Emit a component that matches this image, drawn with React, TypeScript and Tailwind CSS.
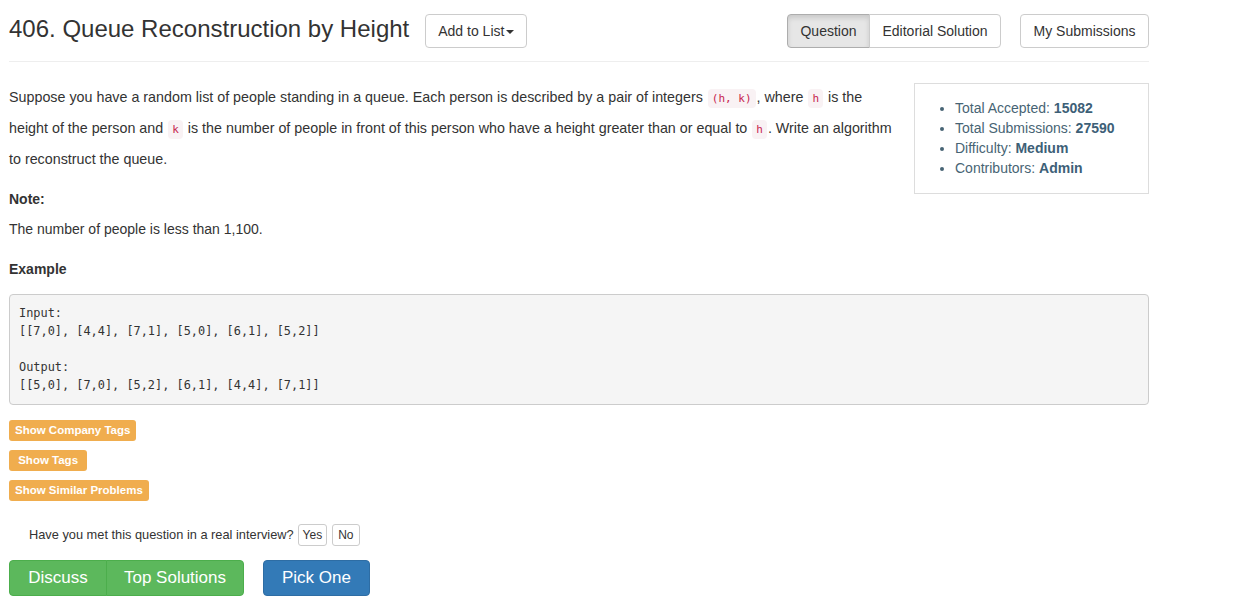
import React from "react";

const Code = ({ children }: { children: React.ReactNode }) => (
  <code className="mx-px rounded-[4px] bg-[#f9f2f4] px-[4px] py-[3px] text-[11px] leading-none text-[#c7254e] [font-family:'DejaVu_Sans_Mono','Liberation_Mono',monospace]">
    {children}
  </code>
);

const Label = ({ children }: { children: React.ReactNode }) => (
  <span className="inline-block rounded-[3px] bg-[#f0ad4e] px-[6px] pb-[3px] pt-[3px] text-[11.5px] font-bold leading-[15px] text-white">
    {children}
  </span>
);

export default function App() {
  return (
    <div className="min-h-[598px] w-[1245px] bg-white text-[14px] text-[#333] [font-family:'Liberation_Sans',Arial,sans-serif]">
      <div className="w-[1158px] pl-[9px] pr-[9px]">
        {/* header */}
        <div className="flex items-start border-b border-[#eee] pb-[13px] pt-[14px]">
          <h3 className="mt-[-3px] text-[24px] font-normal leading-[36px] text-[#333]">
            406. Queue Reconstruction by Height
          </h3>
          <button className="ml-[16px] flex h-[34px] items-center rounded-[4px] border border-[#ccc] bg-white px-[12px] text-[14px] text-[#333]">
            Add to List
            <span className="ml-[2px] mt-[1px] inline-block h-0 w-0 border-x-[4px] border-t-[4px] border-x-transparent border-t-[#333]" />
          </button>
          <div className="ml-auto flex">
            <button className="h-[34px] w-[83px] rounded-l-[4px] border border-[#adadad] bg-[#e6e6e6] text-[14px] text-[#333] shadow-[inset_0_3px_5px_rgba(0,0,0,0.125)]">
              Question
            </button>
            <button className="-ml-px h-[34px] w-[132px] rounded-r-[4px] border border-[#ccc] bg-white text-[14px] text-[#333]">
              Editorial Solution
            </button>
            <button className="ml-[19px] h-[34px] w-[129px] rounded-[4px] border border-[#ccc] bg-white text-[14px] text-[#333]">
              My Submissions
            </button>
          </div>
        </div>

        {/* body */}
        <div className="flex items-start pt-[20px]">
          <div className="flex-1 pr-[22px]">
            <p className="text-[14.3px] leading-[31px]">
              Suppose you have a random list of people standing in a queue. Each person is described by a pair of integers <Code>(h, k)</Code>, where <Code>h</Code> is the height of the person and <Code>k</Code> is the number of people in front of this person who have a height greater than or equal to <Code>h</Code>. Write an algorithm to reconstruct the queue.
            </p>
          </div>
          <div className="mb-[-19px] mt-[1px] w-[235px] border border-[#ddd] pb-[15px] pt-[14px] text-[#476474]">
            <ul className="list-disc pl-[40px] leading-[20px] marker:text-[#476474]">
              <li>Total Accepted: <b className="text-[#3d6077]">15082</b></li>
              <li>Total Submissions: <b className="text-[#3d6077]">27590</b></li>
              <li>Difficulty: <b className="text-[#3d6077]">Medium</b></li>
              <li>Contributors: <b className="text-[#3d6077]">Admin</b></li>
            </ul>
          </div>
        </div>

        <p className="mt-[14px] font-bold leading-[20px]">Note:</p>
        <p className="mt-[10px] leading-[20px]">The number of people is less than 1,100.</p>
        <p className="mt-[20px] font-bold leading-[20px]">Example</p>

        <pre className="mt-[15px] rounded-[4px] border border-[#ccc] bg-[#f5f5f5] px-[9px] pb-[10px] pt-[9px] text-[11.9px] leading-[18px] text-[#333] [font-family:'DejaVu_Sans_Mono','Liberation_Mono',monospace]">
{`Input:
[[7,0], [4,4], [7,1], [5,0], [6,1], [5,2]]

Output:
[[5,0], [7,0], [5,2], [6,1], [4,4], [7,1]]`}
        </pre>

        <div className="mt-[15px] flex flex-col items-start gap-[9px]">
          <Label>Show Company Tags</Label>
          <Label>&nbsp;Show Tags&nbsp;</Label>
          <Label>Show Similar Problems</Label>
        </div>

        <div className="ml-[20px] mt-[23px] flex items-center">
          <span className="text-[12.8px]">Have you met this question in a real interview?</span>
          <button className="ml-[4px] h-[22px] rounded-[3px] border border-[#ccc] bg-white px-[4px] text-[12px] leading-[20px] text-[#333]">Yes</button>
          <button className="ml-[5px] h-[22px] rounded-[3px] border border-[#ccc] bg-white px-[5px] text-[12px] leading-[20px] text-[#333]">No</button>
        </div>

        <div className="mt-[14px] flex">
          <div className="flex">
            <button className="h-[36px] w-[98px] rounded-l-[4px] border border-[#4cae4c] bg-[#5cb85c] text-[17px] text-white">Discuss</button>
            <button className="-ml-px h-[36px] w-[138px] rounded-r-[4px] border border-[#4cae4c] bg-[#5cb85c] text-[17px] text-white">Top Solutions</button>
          </div>
          <button className="ml-[19px] h-[36px] w-[107px] rounded-[4px] border border-[#2e6da4] bg-[#337ab7] text-[17px] text-white">Pick One</button>
        </div>
      </div>
    </div>
  );
}
